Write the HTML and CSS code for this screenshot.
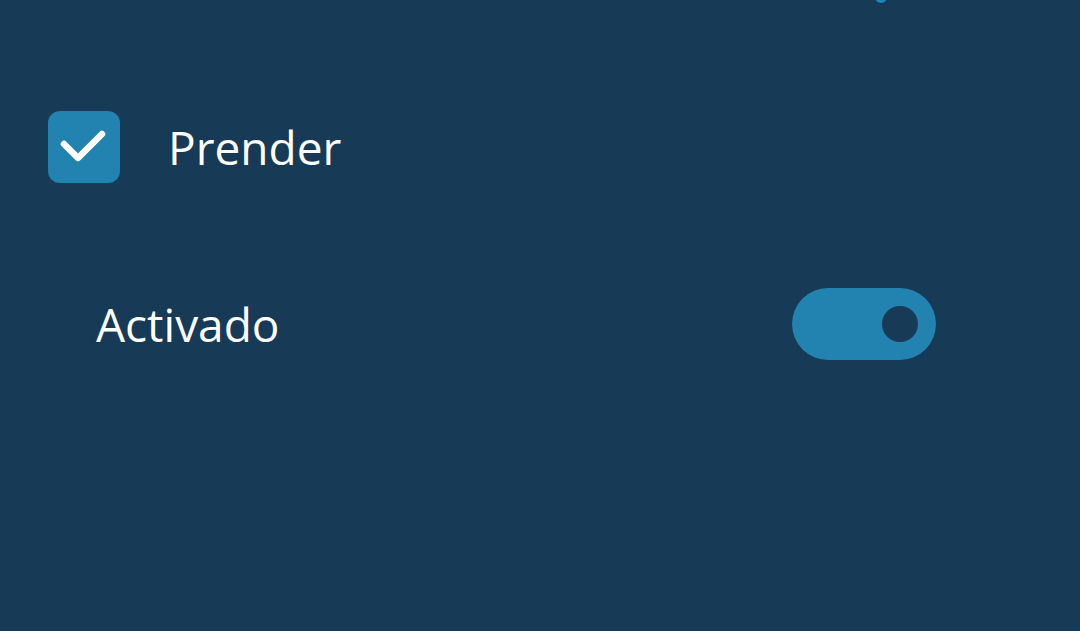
FILE: index.html
```html
<!DOCTYPE html>
<html lang="es">
<head>
<meta charset="utf-8">
<link rel="stylesheet" href="styles.css">
</head>
<body>
<div class="screen">
  <span class="top-dot"></span>
  <div class="check-row">
    <span class="checkbox">
      <svg viewBox="0 0 72 72" width="72" height="72"><path d="M16 33 L30 47 L54 23" fill="none" stroke="#ffffff" stroke-width="6.5" stroke-linecap="round" stroke-linejoin="round"/></svg>
    </span>
    <span class="label">Prender</span>
  </div>
  <div class="toggle-row">
    <span class="label">Activado</span>
    <span class="toggle"><span class="knob"></span></span>
  </div>
</div>
</body>
</html>
```
FILE: styles.css
```css
html, body {
  margin: 0;
  padding: 0;
  background: #173a56;
}
.screen {
  position: relative;
  width: 1080px;
  height: 631px;
  overflow: hidden;
  font-family: "Open Sans", "Noto Sans", sans-serif;
  color: #ffffff;
}
.top-dot {
  position: absolute;
  left: 875px;
  top: -9px;
  width: 12px;
  height: 12px;
  border-radius: 50%;
  background: #1f86b8;
}
.check-row {
  display: flex;
  align-items: center;
  gap: 48px;
  padding: 111px 0 0 48px;
  height: 72px;
}
.checkbox {
  width: 72px;
  height: 72px;
  border-radius: 12px;
  background: #2282b0;
  display: flex;
}
.label {
  font-size: 46px;
  line-height: 72px;
  font-weight: 400;
}
.toggle-row {
  display: flex;
  align-items: center;
  justify-content: space-between;
  width: 840px;
  margin: 105px 0 0 96px;
  height: 72px;
}
.toggle {
  width: 144px;
  height: 72px;
  border-radius: 36px;
  background: #2282b0;
  display: flex;
  align-items: center;
  justify-content: flex-end;
  padding-right: 18px;
  box-sizing: border-box;
}
.knob {
  width: 36px;
  height: 36px;
  border-radius: 50%;
  background: #173a56;
}
```
